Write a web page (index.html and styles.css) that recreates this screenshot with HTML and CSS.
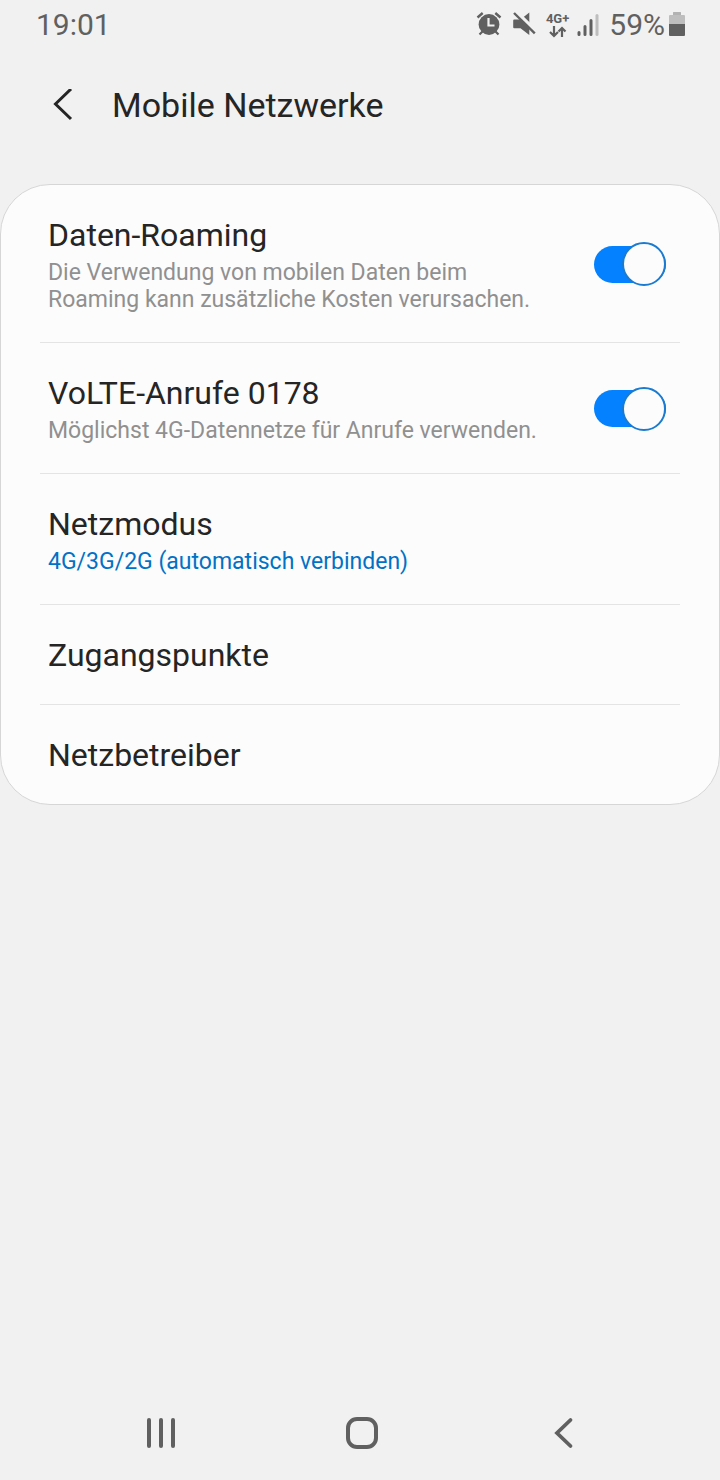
FILE: index.html
```html
<!DOCTYPE html>
<html lang="de">
<head>
<meta charset="utf-8">
<meta name="viewport" content="width=device-width, initial-scale=1">
<title>Mobile Netzwerke</title>
<link rel="stylesheet" href="styles.css">
</head>
<body>
<div class="screen">
  <div class="status">
    <time class="clock">19:01</time>
    <div class="indicators">
      <svg class="alarm" width="26" height="26" viewBox="0 0 26 26" aria-hidden="true">
        <circle cx="13" cy="12.500" r="10.400" fill="#606060"/>
        <path d="M1.500 5.500 6.700 1M24.500 5.500 19.300 1" stroke="#606060" stroke-width="2.400" fill="none"/>
        <path d="M6.500 19.500 3.500 22.500M19.500 19.500l3 3" stroke="#606060" stroke-width="2.200"/>
        <path d="M12.500 6v7.500h6" stroke="#f1f1f1" stroke-width="2.200" fill="none"/>
      </svg>
      <svg class="mute" width="24" height="26" viewBox="0 0 24 26" aria-hidden="true">
        <path d="M1.200 8.500q0-1 1-1h6.300l8.800-7V23l-8.800-6.700H2.200q-1 0-1-1z" fill="#606060"/>
        <path d="M3.500-1 24 19" stroke="#f1f1f1" stroke-width="3.400"/>
        <path d="M2 1 22.800 21.300" stroke="#606060" stroke-width="2.400"/>
      </svg>
      <div class="network">
        <span>4G+</span>
        <svg width="18" height="12" viewBox="0 0 18 12" aria-hidden="true">
          <path d="M5 0v9.500M1 6l4 4 4-4M13 11V2M9.500 5.500 13 2l3.500 3.500" fill="none" stroke="#606060" stroke-width="2.200"/>
        </svg>
      </div>
      <svg class="signal" width="22" height="24" viewBox="0 0 22 24" aria-hidden="true">
        <path d="M2 19.500v2M8 13.500v8M14 7.500v14" stroke="#606060" stroke-width="3" stroke-linecap="round"/>
        <path d="M20 2.500v19" stroke="#bebebe" stroke-width="3" stroke-linecap="round"/>
      </svg>
      <span class="percent">59%</span>
      <svg class="battery" width="16" height="26" viewBox="0 0 16 26" aria-hidden="true">
        <path d="M4 3V1q0-1 1-1h6q1 0 1 1v2h3q1 0 1 1v8H0V4q0-1 1-1z" fill="#bebebe"/>
        <path d="M4 3V1q0-1 1-1h6q1 0 1 1v2z" fill="#b2b2b2"/>
        <path d="M0 12h16v11q0 1-1 1H1q-1 0-1-1z" fill="#606060"/>
      </svg>
    </div>
  </div>

  <header class="header">
    <button class="back" type="button" aria-label="Zurück">
      <svg width="20" height="32" viewBox="0 0 20 32" aria-hidden="true">
        <path d="M18 0 2.500 15 18 30" fill="none" stroke="#252525" stroke-width="3"/>
      </svg>
    </button>
    <h1 class="heading">Mobile Netzwerke</h1>
  </header>

  <main class="card">
    <label class="row" for="roaming">
      <span class="text">
        <span class="title">Daten-Roaming</span>
        <span class="note">Die Verwendung von mobilen Daten beim Roaming kann zusätzliche Kosten verursachen.</span>
      </span>
      <input class="switch" id="roaming" type="checkbox" role="switch" checked>
    </label>
    <label class="row" for="volte">
      <span class="text">
        <span class="title">VoLTE-Anrufe 0178</span>
        <span class="note">Möglichst 4G-Datennetze für Anrufe verwenden.</span>
      </span>
      <input class="switch" id="volte" type="checkbox" role="switch" checked>
    </label>
    <button class="row" type="button">
      <span class="text">
        <span class="title">Netzmodus</span>
        <span class="note value">4G/3G/2G (automatisch verbinden)</span>
      </span>
    </button>
    <button class="row" type="button"><span class="title">Zugangspunkte</span></button>
    <button class="row" type="button"><span class="title">Netzbetreiber</span></button>
  </main>

  <nav class="navbar">
    <button class="key" type="button" aria-label="Letzte Apps">
      <svg width="32" height="32" viewBox="0 0 32 32" aria-hidden="true">
        <path d="M4 3v26M16 3v26M28 3v26" stroke="#606060" stroke-width="4" stroke-linecap="round"/>
      </svg>
    </button>
    <button class="key" type="button" aria-label="Startbildschirm">
      <svg width="32" height="32" viewBox="0 0 32 32" aria-hidden="true">
        <rect x="2" y="2" width="28" height="28" rx="9" fill="none" stroke="#606060" stroke-width="4"/>
      </svg>
    </button>
    <button class="key" type="button" aria-label="Zurück">
      <svg width="32" height="32" viewBox="0 0 32 32" aria-hidden="true">
        <path d="M23.500 3 10 16 23.500 29" fill="none" stroke="#606060" stroke-width="3.800" stroke-linecap="round"/>
      </svg>
    </button>
  </nav>
</div>
</body>
</html>
```

FILE: styles.css
```css
*,
*::before {
  box-sizing: border-box;
}

body {
  margin: 0;
  background: #f1f1f1;
  color: #252525;
  font-family: Roboto, "Noto Sans", sans-serif;
}

button {
  margin: 0;
  padding: 0;
  border: 0;
  background: none;
  color: inherit;
  font: inherit;
  text-align: left;
}

svg {
  display: block;
  flex: none;
}

.screen {
  display: flex;
  flex-direction: column;
  min-height: 100vh;
}

.status {
  display: flex;
  align-items: center;
  justify-content: space-between;
  height: 50px;
  padding: 0 35px 0 36px;
  color: #606060;
  font-size: 30px;
  line-height: 36px;
}

.indicators {
  display: flex;
  align-items: center;
}

.alarm {
  margin-right: 10px;
}

.mute {
  margin-right: 10px;
}

.network {
  display: flex;
  flex-direction: column;
  align-items: center;
  margin-right: 8px;
  font-size: 13px;
  font-weight: 700;
  line-height: 14px;
}

.signal {
  margin-right: 10px;
}

.percent {
  margin-right: 4px;
}

.header {
  display: flex;
  align-items: center;
  height: 110px;
  margin-bottom: 24px;
  padding-left: 53px;
}

.back {
  margin-right: 39px;
}

.heading {
  margin: 0;
  font-size: 34px;
  font-weight: 400;
  line-height: 40px;
}

.card {
  padding: 0 39px;
  border: 1px solid #d6d6d6;
  border-radius: 50px;
  background: #fcfcfc;
}

.row {
  display: flex;
  align-items: center;
  justify-content: space-between;
  gap: 40px;
  width: 100%;
  padding: 28px 14px 27px 8px;
  border-bottom: 1px solid #e4e4e4;
}

.row:last-child {
  border-bottom: 0;
}

.text {
  display: flex;
  flex-direction: column;
  gap: 2px;
  padding-bottom: 2px;
}

.title {
  font-size: 32px;
  line-height: 44px;
}

.note {
  color: #909090;
  font-size: 23px;
  line-height: 27px;
}

.value {
  color: #0072c6;
}

.switch {
  display: flex;
  flex: none;
  align-items: center;
  appearance: none;
  width: 72px;
  height: 37px;
  margin: 0;
  border-radius: 19px;
  background: #b4b4b4;
}

.switch::before {
  content: "";
  flex: none;
  width: 44px;
  height: 44px;
  border: 2px solid #8c8c8c;
  border-radius: 50%;
  background: #fcfcfc;
}

.switch:checked {
  justify-content: flex-end;
  background: #0381fe;
}

.switch:checked::before {
  border-color: #1a7bd0;
}

.navbar {
  display: flex;
  justify-content: center;
  margin-top: auto;
  padding: 0 56px 0 60px;
}

.key {
  display: flex;
  flex: 1;
  align-items: center;
  justify-content: center;
  height: 94px;
}
```
